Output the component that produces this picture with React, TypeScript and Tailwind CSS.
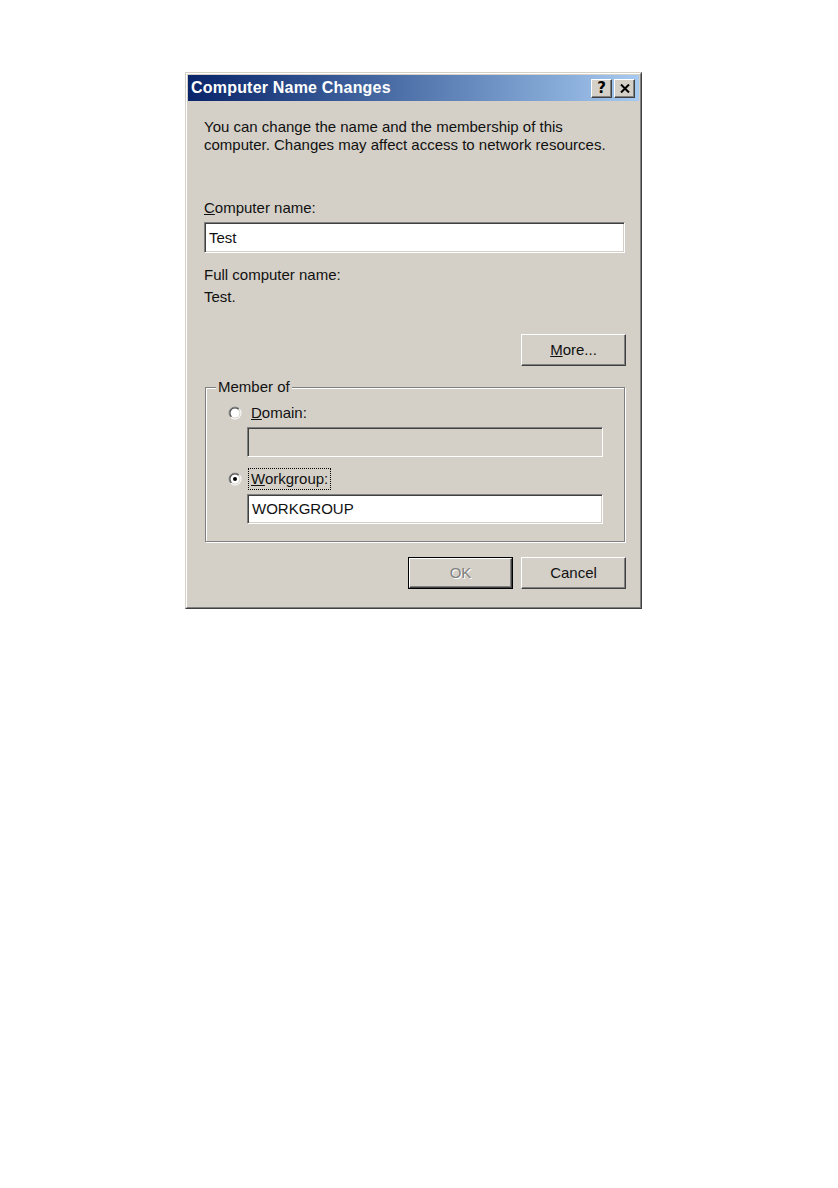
import React from 'react'

const raised =
  'border border-t-white border-l-white border-r-[#404040] border-b-[#404040] bg-[#d4d0c8] shadow-[inset_-1px_-1px_0_#808080,inset_1px_1px_0_#d4d0c8]'
const sunken =
  'border border-t-[#808080] border-l-[#808080] border-r-white border-b-white shadow-[inset_1px_1px_0_#404040,inset_-1px_-1px_0_#d4d0c8]'

function Radio({ checked }: { checked?: boolean }) {
  const arc = (r: number) => {
    const d = r / Math.SQRT2
    return `M ${7 - d} ${7 + d} A ${r} ${r} 0 0 1 ${7 + d} ${7 - d} Z`
  }
  return (
    <svg width="14" height="14" viewBox="0 0 14 14" className="shrink-0">
      <circle cx="7" cy="7" r="6.5" fill="#ffffff" />
      <path d={arc(6.5)} fill="#808080" />
      <circle cx="7" cy="7" r="5.5" fill="#d4d0c8" />
      <path d={arc(5.5)} fill="#404040" />
      <circle cx="7" cy="7" r="4.5" fill="#ffffff" />
      {checked && <circle cx="7" cy="7" r="2" fill="#000000" />}
    </svg>
  )
}

function Button({ children, isDefault }: { children: React.ReactNode; isDefault?: boolean }) {
  if (isDefault) {
    return (
      <div className="w-[105px] h-[32px] border border-black">
        <div className={`h-full flex items-center justify-center ${raised}`}>{children}</div>
      </div>
    )
  }
  return <div className={`w-[105px] h-[32px] flex items-center justify-center ${raised}`}>{children}</div>
}

export default function App() {
  return (
    <div className="min-h-screen bg-white pt-[72px] pl-[185px] font-['Liberation_Sans',Arial,sans-serif] text-[15px] leading-[18px] text-[#111]">
      <div className="w-[457px] h-[537px] border border-t-[#d4d0c8] border-l-[#d4d0c8] border-r-[#404040] border-b-[#404040]">
        <div className="h-full flex flex-col p-px bg-[#d4d0c8] border border-t-white border-l-white border-r-[#808080] border-b-[#808080]">
          {/* Title bar */}
          <div className="h-[26px] shrink-0 flex items-center justify-between pl-[3px] pr-[4px] bg-linear-to-r from-[#0a246a] to-[#a6caf0]">
            <span className="text-white font-bold text-[16px] leading-[20px] tracking-[0.2px]">Computer Name Changes</span>
            <div className="flex items-center gap-[2px]">
              <div className={`w-[21px] h-[19px] flex items-center justify-center ${raised}`}>
                <span className="font-bold text-[15px] leading-none text-black font-['DejaVu_Sans',sans-serif]">?</span>
              </div>
              <div className={`w-[21px] h-[19px] flex items-center justify-center ${raised}`}>
                <svg width="10" height="9" viewBox="0 0 10 9">
                  <path d="M1 0.5L9 8.5M9 0.5L1 8.5" stroke="#000" strokeWidth="2" />
                </svg>
              </div>
            </div>
          </div>

          {/* Body */}
          <div className="flex-1 flex flex-col pl-[16px] pr-[14px]">
            <p className="mt-[17px]">
              You can change the name and the membership of this
              <br />
              computer. Changes may affect access to network resources.
            </p>

            <label className="mt-[45px]">
              <span className="underline">C</span>omputer name:
            </label>
            <div className={`mt-[5px] h-[31px] bg-white flex items-center pl-[4px] ${sunken}`}>Test</div>

            <div className="mt-[11px] leading-[22px]">
              <div>Full computer name:</div>
              <div>Test.</div>
            </div>

            <div className="mt-[26px] self-end -mr-px">
              <Button>
                <span>
                  <span className="underline">M</span>ore...
                </span>
              </Button>
            </div>

            {/* Member of */}
            <div className="relative mt-[21px] ml-px h-[155px] border border-[#808080] shadow-[1px_1px_0_#ffffff,inset_1px_1px_0_#ffffff] pt-[14px]">
              <span className="absolute -top-[10px] left-[10px] px-[2px] bg-[#d4d0c8]">Member of</span>

              <div className="flex items-center pl-[22px] gap-[6px]">
                <Radio />
                <span className="border border-transparent px-[2px] py-px">
                  <span className="underline">D</span>omain:
                </span>
              </div>
              <div className={`mt-[3px] ml-[41px] w-[356px] h-[30px] bg-[#d4d0c8] ${sunken}`} />

              <div className="mt-[11px] flex items-center pl-[22px] gap-[6px]">
                <Radio checked />
                <span className="border border-dotted border-black px-[2px] py-px">
                  <span className="underline">W</span>orkgroup:
                </span>
              </div>
              <div className={`mt-[4px] ml-[41px] w-[356px] h-[30px] bg-white flex items-center pl-[4px] ${sunken}`}>
                WORKGROUP
              </div>
            </div>

            <div className="mt-[15px] flex justify-end gap-[8px] -mr-px">
              <Button isDefault>
                <span className="text-[#808080] [text-shadow:1px_1px_0_#ffffff]">OK</span>
              </Button>
              <Button>Cancel</Button>
            </div>
          </div>
        </div>
      </div>
    </div>
  )
}
